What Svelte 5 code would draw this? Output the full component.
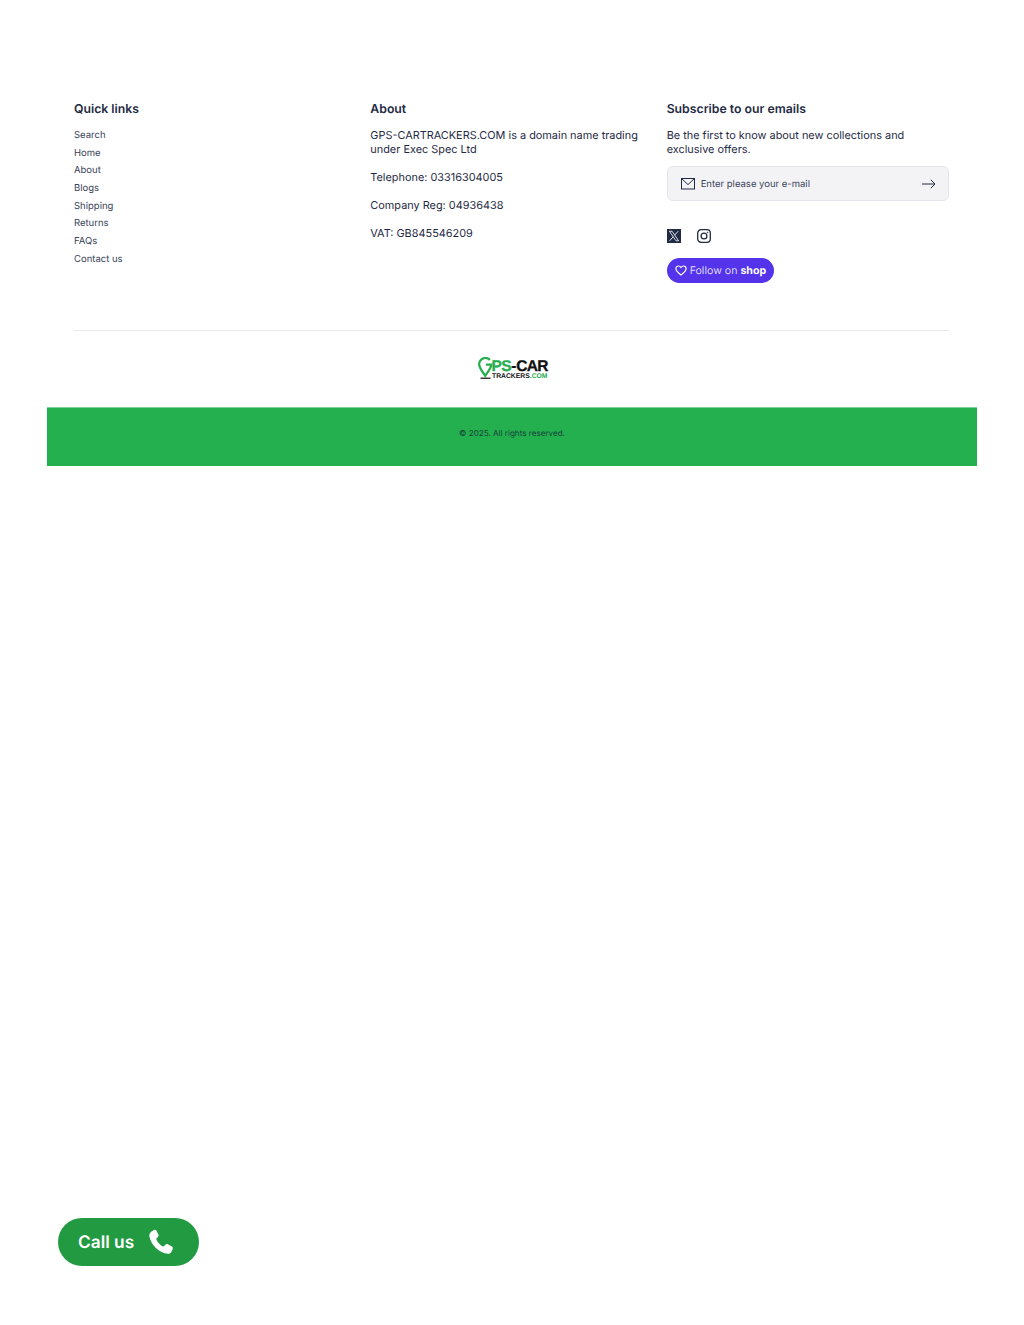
<script>
  const links = ['Search', 'Home', 'About', 'Blogs', 'Shipping', 'Returns', 'FAQs', 'Contact us'];
</script>

<div class="page">
  <footer class="footer">
    <div class="columns">
      <div class="col">
        <h2>Quick links</h2>
        <ul class="links">
          {#each links as link}
            <li>{link}</li>
          {/each}
        </ul>
      </div>

      <div class="col">
        <h2>About</h2>
        <div class="about">
          <p>GPS-CARTRACKERS.COM is a domain name trading under Exec Spec Ltd</p>
          <p>Telephone: 03316304005</p>
          <p>Company Reg: 04936438</p>
          <p>VAT: GB845546209</p>
        </div>
      </div>

      <div class="col">
        <h2>Subscribe to our emails</h2>
        <p class="intro">Be the first to know about new collections and exclusive offers.</p>
        <div class="field">
          <svg class="mail" viewBox="0 0 14 12" width="14" height="12" fill="none" stroke="#1f2a44" stroke-width="1">
            <rect x="0.5" y="0.5" width="13" height="10.5" />
            <path d="M0.8 0.8 7 6.6 13.2 0.8" />
          </svg>
          <span class="placeholder">Enter please your e-mail</span>
          <svg class="arrow" viewBox="0 0 14 10" width="14" height="10" fill="none" stroke="#1f2a44" stroke-width="1">
            <path d="M0 5H13M8.8 0.8 13 5 8.8 9.2" />
          </svg>
        </div>
        <div class="social">
          <svg viewBox="0 0 14 14" width="14" height="14">
            <rect width="14" height="14" fill="#1f2a44" />
            <path d="M2.4 2.2H5L11.6 11.8H9Z" fill="none" stroke="#fff" stroke-width="0.8" />
            <path d="M11.2 2.2 7.6 6.2M6.2 7.8 2.6 11.8" fill="none" stroke="#fff" stroke-width="0.9" />
          </svg>
          <svg viewBox="0 0 14 14" width="14" height="14" fill="none" stroke="#1f2a44" stroke-width="1.3">
            <rect x="0.7" y="0.7" width="12.6" height="12.6" rx="3.4" />
            <circle cx="7" cy="7" r="2.9" />
            <circle cx="10.6" cy="3.4" r="0.5" fill="#1f2a44" stroke-width="0.4" />
          </svg>
        </div>
        <div class="shop">
          <svg viewBox="0 0 14 13" width="12" height="11" fill="none" stroke="#fff" stroke-width="1.4">
            <path d="M7 11.8C3.6 9.2 1 7 1 4.4 1 2.5 2.4 1.2 4 1.2 5.2 1.2 6.3 1.8 7 3 7.7 1.8 8.8 1.2 10 1.2 11.6 1.2 13 2.5 13 4.4 13 7 10.4 9.2 7 11.8Z" />
          </svg>
          <span class="follow">Follow on <b>shop</b></span>
        </div>
      </div>
    </div>

    <div class="rule"></div>

    <div class="logo" aria-label="GPS-CARTRACKERS.COM">
      <svg class="pin" viewBox="0 0 15 23" width="15" height="23" fill="none">
        <path d="M11.9 2.9A6.2 6.2 0 0 0 1.7 9.6C2.6 12.5 5.2 15.9 7.2 18.8 9.2 15.9 11.8 12.5 13 9.3 13.2 8.8 13.3 8.2 13.3 7.6H8" stroke="#27ae4f" stroke-width="2.3" />
        <path d="M2.5 21.2H12.5" stroke="#111" stroke-width="1.2" />
      </svg>
      <div class="logo-text">
        <div class="logo-top"><span class="g">PS</span><span class="k dash">-</span><span class="k">CAR</span></div>
        <div class="logo-sub"><span class="k">TRACKERS</span><span class="g">.COM</span></div>
      </div>
    </div>

    <div class="copyright">
      <span>© 2025. All rights reserved.</span>
    </div>
  </footer>

  <div class="call">
    <span>Call us</span>
    <svg viewBox="0 0 26 26" width="26" height="26" fill="#fff">
      <path d="M6.1 0.9C7 0.5 8 0.8 8.5 1.7L10.4 5.6C10.8 6.4 10.6 7.3 10 7.9L8.6 9.2C8.2 9.6 8.2 10 8.4 10.5 9.7 13.5 11.9 16 14.9 17.4 15.4 17.6 15.9 17.5 16.2 17.1L17.6 15.6C18.2 15 19.1 14.9 19.8 15.3L23.9 17.6C24.8 18.1 25.1 19.1 24.7 20L23.6 22.5C23 23.9 21.6 24.9 20 24.8 11.3 24.2 2.8 15.6 1.4 7.4 1.1 5.5 1.9 3.7 3.5 2.5Z" />
    </svg>
  </div>
</div>

<style>
  :global(body) {
    margin: 0;
    background: #fff;
    font-family: Inter, "Liberation Sans", sans-serif;
    color: #1f2a44;
    text-rendering: geometricPrecision;
  }

  .page {
    height: 1325px;
    position: relative;
    overflow: hidden;
  }

  .footer {
    margin: 0 47px;
    padding-top: 101px;
  }

  .columns {
    display: grid;
    grid-template-columns: repeat(3, 1fr);
    gap: 14px;
    padding: 0 28px 0 27px;
    height: 229px;
  }

  h2 {
    margin: 0 0 11px;
    font-size: 12.25px;
    line-height: 16px;
    font-weight: 600;
  }

  .links {
    list-style: none;
    margin: 0;
    padding: 1px 0 0;
    display: flex;
    flex-direction: column;
    gap: 3.7px;
    font-size: 9.5px;
    line-height: 14px;
    color: #3a4359;
  }

  .about,
  .intro {
    font-size: 10.9px;
    line-height: 14px;
  }

  .about p {
    margin: 0 0 14px;
  }

  .intro {
    margin: 0 0 10px;
  }

  .field {
    display: flex;
    align-items: center;
    box-sizing: border-box;
    height: 35px;
    padding: 0 12px 0 13px;
    background: #f3f3f6;
    border: 1px solid #e4e5ea;
    border-radius: 6px;
  }

  .placeholder {
    flex: 1;
    margin-left: 6px;
    padding-top: 1px;
    font-size: 9.5px;
    color: #3a4359;
  }

  .social {
    display: flex;
    gap: 16px;
    margin-top: 28px;
  }

  .social svg {
    display: block;
  }

  .shop {
    display: inline-flex;
    align-items: center;
    gap: 3px;
    box-sizing: border-box;
    width: 107.5px;
    height: 25px;
    margin-top: 15px;
    padding-left: 8px;
    background: #5433eb;
    border-radius: 13px;
  }

  .follow {
    font-size: 10.6px;
    color: #ded7fb;
    white-space: nowrap;
  }

  .follow b {
    font-weight: 700;
    color: #fff;
  }

  .rule {
    height: 1px;
    margin: 0 28px 0 27px;
    background: #e8e9ec;
  }

  .logo {
    display: flex;
    justify-content: center;
    height: 76px;
    padding-top: 26px;
    box-sizing: border-box;
    margin-left: 1px;
  }

  .pin {
    margin-right: -1px;
  }

  .logo-text {
    width: 56px;
    font-family: "Liberation Sans", sans-serif;
    font-weight: 700;
    white-space: nowrap;
  }

  .logo-top {
    margin-top: 3px;
    font-size: 15.5px;
    line-height: 14px;
    letter-spacing: -0.7px;
    text-align: right;
    -webkit-text-stroke: 0.3px currentColor;
  }

  .dash {
    margin: 0 0.5px;
  }

  .logo-sub {
    font-size: 6.8px;
    line-height: 5px;
    text-align: right;
  }

  .g {
    color: #27ae4f;
  }

  .k {
    color: #111;
  }

  .copyright {
    height: 59px;
    padding-top: 19px;
    box-sizing: border-box;
    background: #25b04f;
    border-top: 1px solid #7fd09a;
    text-align: center;
    font-size: 8.1px;
    line-height: 12px;
    color: #14423a;
  }

  .call {
    position: absolute;
    left: 57.5px;
    top: 1218px;
    display: flex;
    align-items: center;
    gap: 14px;
    box-sizing: border-box;
    width: 141px;
    height: 48px;
    padding-left: 20.5px;
    background: #229a41;
    border-radius: 24px;
    color: #fff;
    font-size: 17.3px;
    font-weight: 600;
  }
</style>
